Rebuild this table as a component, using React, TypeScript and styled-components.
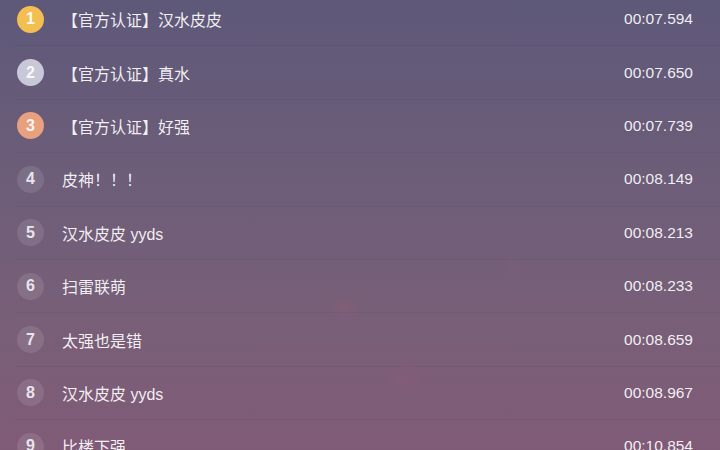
import React from "react";
import styled, { createGlobalStyle } from "styled-components";

const Global = createGlobalStyle`
  html, body { margin: 0; padding: 0; }
  body {
    width: 720px;
    height: 450px;
    overflow: hidden;
    font-family: "Liberation Sans", "Noto Sans CJK SC", sans-serif;
  }
`;

const Page = styled.div`
  width: 720px;
  height: 450px;
  overflow: hidden;
  background:
    radial-gradient(circle at 345px 308px, rgba(165, 90, 110, 0.22) 0, rgba(165, 90, 110, 0) 14px),
    radial-gradient(circle at 405px 378px, rgba(160, 90, 120, 0.2) 0, rgba(160, 90, 120, 0) 18px),
    radial-gradient(circle at 512px 268px, rgba(140, 100, 130, 0.14) 0, rgba(140, 100, 130, 0) 12px),
    linear-gradient(180deg, #5e5879 0%, #6b5d79 35%, #785f78 70%, #805b77 100%);
`;

const List = styled.ul`
  list-style: none;
  margin: -7px 0 0 0;
  padding: 0 0 0 15px;
`;

const Row = styled.li`
  display: flex;
  align-items: center;
  height: 53.4px;
  box-sizing: border-box;
  padding: 0 27px 0 2px;
  border-bottom: 1px solid rgba(50, 30, 60, 0.07);
`;

const medal: Record<number, string> = {
  1: "#f3bf52",
  2: "#c8c8d8",
  3: "#e9a07f",
};

const Badge = styled.span<{ $rank: number }>`
  flex: none;
  width: 27px;
  height: 27px;
  border-radius: 50%;
  display: flex;
  align-items: center;
  justify-content: center;
  background: ${(p) => medal[p.$rank] ?? "rgba(255,255,255,0.11)"};
  color: ${(p) => (medal[p.$rank] ? "rgba(255,255,255,0.92)" : "#e8e4ec")};
  font-family: "Liberation Sans", sans-serif;
  font-weight: bold;
  font-size: 16px;
`;

const Name = styled.span`
  flex: 1;
  margin-left: 18px;
  color: rgba(255, 255, 255, 0.92);
  font-size: 16px;
  font-family: "Liberation Sans", "Noto Sans CJK SC", sans-serif;
  white-space: nowrap;
`;

const Time = styled.span`
  flex: none;
  color: rgba(255, 255, 255, 0.92);
  font-size: 15.5px;
  font-family: "Liberation Sans", sans-serif;
`;

const rows = [
  { name: "【官方认证】汉水皮皮", time: "00:07.594" },
  { name: "【官方认证】真水", time: "00:07.650" },
  { name: "【官方认证】好强", time: "00:07.739" },
  { name: "皮神！！！", time: "00:08.149" },
  { name: "汉水皮皮 yyds", time: "00:08.213" },
  { name: "扫雷联萌", time: "00:08.233" },
  { name: "太强也是错", time: "00:08.659" },
  { name: "汉水皮皮 yyds", time: "00:08.967" },
  { name: "比楼下强", time: "00:10.854" },
];

export default function App() {
  return (
    <Page>
      <Global />
      <List>
        {rows.map((r, i) => (
          <Row key={i}>
            <Badge $rank={i + 1}>{i + 1}</Badge>
            <Name>{r.name}</Name>
            <Time>{r.time}</Time>
          </Row>
        ))}
      </List>
    </Page>
  );
}
